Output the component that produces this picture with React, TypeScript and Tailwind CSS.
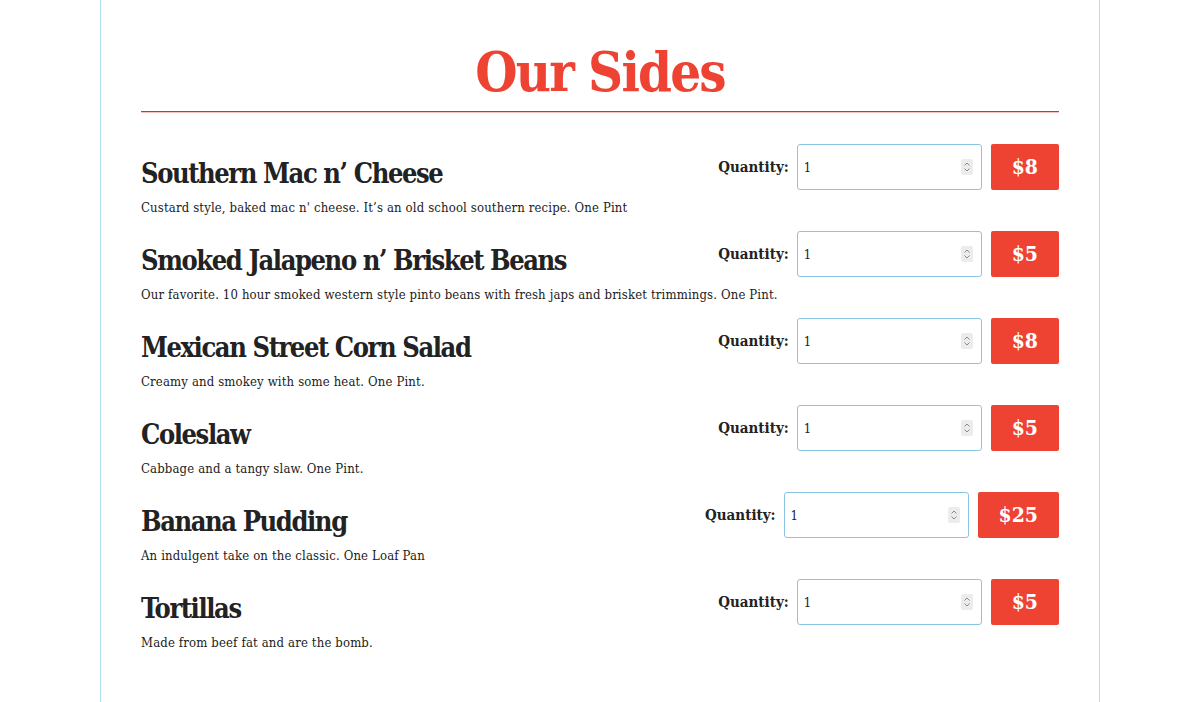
const SIDES = [
  {
    name: "Southern Mac n’ Cheese",
    desc: "Custard style, baked mac n' cheese. It’s an old school southern recipe. One Pint",
    price: "$8",
  },
  {
    name: "Smoked Jalapeno n’ Brisket Beans",
    desc: "Our favorite. 10 hour smoked western style pinto beans with fresh japs and brisket trimmings. One Pint.",
    price: "$5",
  },
  {
    name: "Mexican Street Corn Salad",
    desc: "Creamy and smokey with some heat. One Pint.",
    price: "$8",
  },
  {
    name: "Coleslaw",
    desc: "Cabbage and a tangy slaw. One Pint.",
    price: "$5",
  },
  {
    name: "Banana Pudding",
    desc: "An indulgent take on the classic. One Loaf Pan",
    price: "$25",
  },
  {
    name: "Tortillas",
    desc: "Made from beef fat and are the bomb.",
    price: "$5",
  },
];

function Spinner() {
  return (
    <span className="pointer-events-none absolute right-[9px] top-1/2 flex h-[16px] w-[12px] -translate-y-1/2 items-center justify-center rounded-[2px] bg-[#ececec]">
      <svg viewBox="0 0 12 16" className="h-[16px] w-[12px]" fill="none" stroke="#8a8a8a" strokeWidth="1">
        <path d="M3.5 6.5 6 4l2.5 2.5" />
        <path d="M3.5 9.5 6 12l2.5-2.5" />
      </svg>
    </span>
  );
}

function SideRow({ name, desc, price }: { name: string; desc: string; price: string }) {
  return (
    <div className="h-[87px]">
      <div className="float-right flex items-center">
        <span className="mr-[8px] text-[15px] font-bold text-[#222]">Quantity:</span>
        <div className="relative">
          <input
            readOnly
            value="1"
            className="h-[46px] w-[185px] rounded-[3px] border border-[#8cc4e6] bg-white px-[6px] text-[13px] text-[#222] outline-none"
          />
          <Spinner />
        </div>
        <button className="ml-[9px] h-[46px] rounded-[2px] bg-[#ee4232] px-[21px] text-[21px] font-bold text-white">
          {price}
        </button>
      </div>
      <h2 className="whitespace-nowrap pt-[13px] text-[27px] font-bold leading-[34px] tracking-[-1.4px] text-[#222]">
        {name}
      </h2>
      <p className="mt-[8px] whitespace-nowrap text-[13px] leading-[18px] tracking-[0.15px] text-[#222]">
        {desc}
      </p>
    </div>
  );
}

export default function App() {
  return (
    <div className="flex min-h-[702px] justify-center bg-white font-['DejaVu_Serif_Condensed','DejaVu_Serif',serif]">
      <div className="w-[1000px] border-x border-[#b3e0f2] px-[40px] pt-[40px] pb-[40px]">
        <h1 className="pb-[7px] text-center text-[54px] font-bold leading-[64px] tracking-[-1.8px] text-[#ee4232]">
          Our Sides
        </h1>
        <div className="h-px bg-[#d8332a] shadow-[0_1px_0_#f5c2bd]" />
        <div className="h-[32px]" />
        {SIDES.map((s) => (
          <SideRow key={s.name} {...s} />
        ))}
      </div>
    </div>
  );
}
